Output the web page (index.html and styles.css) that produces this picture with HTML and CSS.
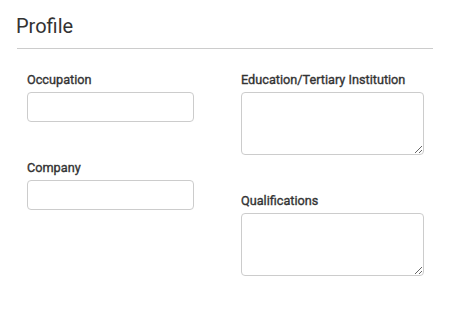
FILE: index.html
```html
<!DOCTYPE html>
<html lang="en">
<head>
<meta charset="utf-8">
<title>Profile</title>
<link rel="stylesheet" href="styles.css">
</head>
<body>
<section class="panel">
  <h2 class="panel-title">Profile</h2>
  <div class="divider"></div>
  <form class="profile-form">
    <div class="col">
      <div class="field">
        <label class="field-label" for="occupation">Occupation</label>
        <input class="text-input" id="occupation" type="text">
      </div>
      <div class="field">
        <label class="field-label" for="company">Company</label>
        <input class="text-input" id="company" type="text">
      </div>
    </div>
    <div class="col">
      <div class="field">
        <label class="field-label" for="education">Education/Tertiary Institution</label>
        <textarea class="text-area" id="education"></textarea>
      </div>
      <div class="field">
        <label class="field-label" for="qualifications">Qualifications</label>
        <textarea class="text-area" id="qualifications"></textarea>
      </div>
    </div>
  </form>
</section>
</body>
</html>
```
FILE: styles.css
```css
* { box-sizing: border-box; }
html, body {
  margin: 0;
  padding: 0;
  background: #ffffff;
  font-family: Roboto, "Liberation Sans", Arial, sans-serif;
  color: #333333;
}
.panel {
  width: 451px;
  padding: 14px 18px 0 16px;
}
.panel-title {
  margin: 0;
  font-size: 20px;
  line-height: 24px;
  font-weight: 400;
  color: #333333;
  padding-bottom: 10px;
}
.divider {
  height: 1px;
  background: #cccccc;
  margin-left: 1px;
}
.profile-form {
  display: grid;
  grid-template-columns: 214px 183px;
  padding: 22px 0 0 11px;
}
.col {
  display: flex;
  flex-direction: column;
  gap: 37px;
}
.field {
  display: flex;
  flex-direction: column;
  gap: 3px;
}
.field-label {
  font-size: 12.7px;
  line-height: 18px;
  font-weight: 400;
  color: #333333;
  -webkit-text-stroke: 0.35px #333333;
}
.text-input,
.text-area {
  display: block;
  margin: 0;
  border: 1px solid #cccccc;
  border-radius: 4px;
  background: #ffffff;
  font-family: inherit;
  font-size: 13px;
  padding: 4px 8px;
}
.text-input {
  width: 167px;
  height: 30px;
}
.text-area {
  width: 183px;
  height: 63px;
  resize: both;
}
```
